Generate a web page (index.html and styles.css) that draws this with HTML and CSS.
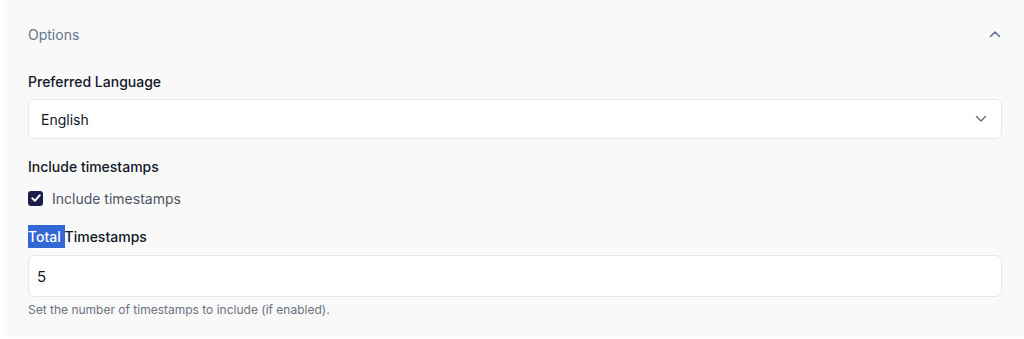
FILE: index.html
```html
<!DOCTYPE html>
<html lang="en">
<head>
<meta charset="utf-8">
<link rel="stylesheet" href="styles.css">
</head>
<body>
<section class="panel">
  <header class="panel-head">
    <span class="panel-title">Options</span>
    <svg class="chev-up" width="12" height="8" viewBox="0 0 12 8"><path d="M1.5 6.5 L6 2 L10.5 6.5" fill="none" stroke="#64748b" stroke-width="1.6" stroke-linecap="round" stroke-linejoin="round"/></svg>
  </header>
  <div class="field field-lang">
    <label class="label">Preferred Language</label>
    <div class="control select">
      <span>English</span>
      <svg width="12" height="8" viewBox="0 0 12 8"><path d="M1.5 1.5 L6 6 L10.5 1.5" fill="none" stroke="#6b7280" stroke-width="1.5" stroke-linecap="round" stroke-linejoin="round"/></svg>
    </div>
  </div>
  <div class="field field-ts">
    <label class="label">Include timestamps</label>
    <div class="check-row">
      <span class="checkbox"><svg width="12" height="12" viewBox="0 0 12 12"><path d="M2.3 6.3 L4.9 8.8 L9.8 3.2" fill="none" stroke="#fff" stroke-width="2" stroke-linecap="round" stroke-linejoin="round"/></svg></span>
      <span class="check-text">Include timestamps</span>
    </div>
  </div>
  <div class="field field-total">
    <label class="label"><span class="sel">Total </span>Timestamps</label>
    <div class="control input"><span>5</span></div>
    <p class="help">Set the number of timestamps to include (if enabled).</p>
  </div>
</section>
</body>
</html>
```
FILE: styles.css
```css
html, body { margin: 0; padding: 0; background: #ffffff; }
body {
  font-family: Inter, "Noto Sans", "Liberation Sans", sans-serif;
  padding: 0 0 2px 4px;
}
.panel {
  background: #f9f9fa;
  padding: 22px 22px 16px 24px;
  height: 337px;
  box-sizing: border-box;
}
.panel-head {
  display: flex;
  justify-content: space-between;
  align-items: center;
  height: 24px;
}
.panel-title { font-size: 14px; color: #64748b; }
.chev-up { margin-right: 1px; }
.field-lang { margin-top: 24px; }
.field-ts { margin-top: 16px; }
.field-total { margin-top: 19px; }
.label {
  display: block;
  font-size: 14px;
  font-weight: 500;
  color: #111827;
  line-height: 24px;
}
.sel {
  background: #3367d6;
  color: #ffffff;
  padding: 3px 0;
  white-space: pre;
}
.control {
  margin-top: 5px;
  background: #ffffff;
  border: 1px solid #e6e7ee;
  border-radius: 6px;
  box-sizing: border-box;
  display: flex;
  align-items: center;
  font-size: 14px;
  color: #111827;
}
.select {
  height: 40px;
  padding: 0 14px 0 12px;
  justify-content: space-between;
}
.input {
  height: 42px;
  padding: 0 10px 0 8px;
  margin-top: 6px;
}
.input span { font-size: 15px; }
.check-row {
  display: flex;
  align-items: center;
  margin-top: 11px;
  height: 16px;
}
.checkbox {
  width: 15px;
  height: 15px;
  background: #1e1e4b;
  border-radius: 3px;
  display: flex;
  align-items: center;
  justify-content: center;
}
.check-text { margin-left: 9px; font-size: 14px; color: #4b5563; }
.help {
  margin: 5px 0 0 0;
  font-size: 12px;
  color: #6b7280;
}
```
